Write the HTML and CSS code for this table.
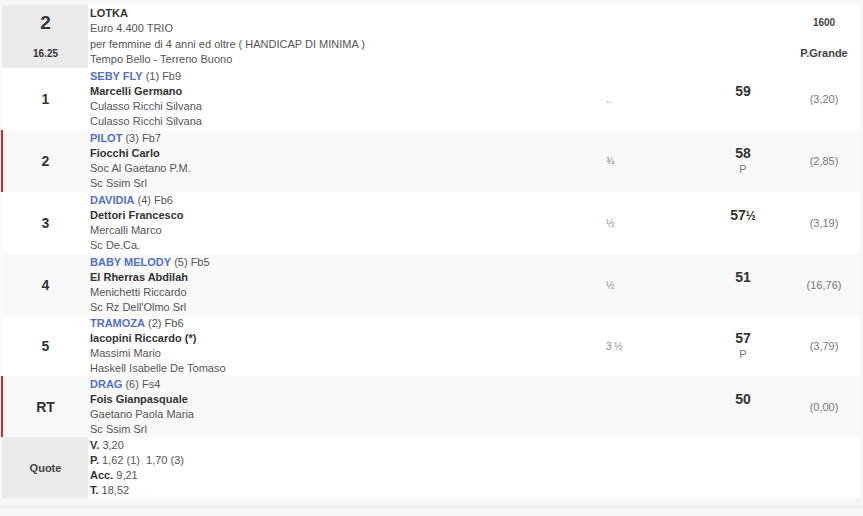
FILE: index.html
```html
<!DOCTYPE html>
<html>
<head>
<meta charset="utf-8">
<link rel="stylesheet" href="styles.css">
</head>
<body>
<div class="wrap">
<table class="race">
  <tr class="head">
    <td class="num headnum"><div class="big">2</div><div class="time">16.25</div></td>
    <td class="info head-info">
      <div class="b">LOTKA</div>
      <div>Euro 4.400 TRIO</div>
      <div>per femmine di 4 anni ed oltre ( HANDICAP DI MINIMA )</div>
      <div>Tempo Bello - Terreno Buono</div>
    </td>
    <td class="dist"></td>
    <td class="wt"></td>
    <td class="odds headright"><div class="dst">1600</div><div class="track">P.Grande</div></td>
  </tr>
  <tr>
    <td class="num">1</td>
    <td class="info"><div><span class="horse">SEBY FLY</span> (1) Fb9</div><div class="jockey">Marcelli Germano</div><div>Culasso Ricchi Silvana</div><div>Culasso Ricchi Silvana</div></td>
    <td class="dist">..</td>
    <td class="wt"><div class="kg">59</div><div class="p"></div></td>
    <td class="odds">(3,20)</td>
  </tr>
  <tr class="alt red">
    <td class="num">2</td>
    <td class="info"><div><span class="horse">PILOT</span> (3) Fb7</div><div class="jockey">Fiocchi Carlo</div><div>Soc Al Gaetano P.M.</div><div>Sc Ssim Srl</div></td>
    <td class="dist">¾</td>
    <td class="wt"><div class="kg">58</div><div class="p">P</div></td>
    <td class="odds">(2,85)</td>
  </tr>
  <tr>
    <td class="num">3</td>
    <td class="info"><div><span class="horse">DAVIDIA</span> (4) Fb6</div><div class="jockey">Dettori Francesco</div><div>Mercalli Marco</div><div>Sc De.Ca.</div></td>
    <td class="dist">½</td>
    <td class="wt"><div class="kg">57<span class="frac">½</span></div><div class="p"></div></td>
    <td class="odds">(3,19)</td>
  </tr>
  <tr class="alt">
    <td class="num">4</td>
    <td class="info"><div><span class="horse">BABY MELODY</span> (5) Fb5</div><div class="jockey">El Rherras Abdilah</div><div>Menichetti Riccardo</div><div>Sc Rz Dell'Olmo Srl</div></td>
    <td class="dist">½</td>
    <td class="wt"><div class="kg">51</div><div class="p"></div></td>
    <td class="odds">(16,76)</td>
  </tr>
  <tr class="short">
    <td class="num">5</td>
    <td class="info"><div><span class="horse">TRAMOZA</span> (2) Fb6</div><div class="jockey">Iacopini Riccardo (*)</div><div>Massimi Mario</div><div>Haskell Isabelle De Tomaso</div></td>
    <td class="dist">3 ½</td>
    <td class="wt"><div class="kg">57</div><div class="p">P</div></td>
    <td class="odds">(3,79)</td>
  </tr>
  <tr class="alt red mid">
    <td class="num">RT</td>
    <td class="info"><div><span class="horse">DRAG</span> (6) Fs4</div><div class="jockey">Fois Gianpasquale</div><div>Gaetano Paola Maria</div><div>Sc Ssim Srl</div></td>
    <td class="dist"></td>
    <td class="wt"><div class="kg">50</div><div class="p"></div></td>
    <td class="odds">(0,00)</td>
  </tr>
  <tr class="quote mid">
    <td class="num qlabel">Quote</td>
    <td class="info"><div><b>V.</b> 3,20</div><div><b>P.</b> 1,62 (1)&nbsp; 1,70 (3)</div><div><b>Acc.</b> 9,21</div><div><b>T.</b> 18,52</div></td>
    <td class="dist"></td>
    <td class="wt"></td>
    <td class="odds"></td>
  </tr>
</table>
</div>
<div class="foot"></div>
</body>
</html>
```

FILE: styles.css
```css
html, body {
  margin: 0;
  padding: 0;
  background: #f7f7f7;
  font-family: "Liberation Sans", Arial, sans-serif;
  font-size: 11px;
  color: #555;
}
.wrap {
  padding: 5px 3px 0 1px;
}
.race {
  width: 859px;
  border-collapse: collapse;
  table-layout: fixed;
  background: #fff;
}
.race td {
  padding: 0;
  vertical-align: middle;
}
.race tr {
  height: 62px;
}
.race tr.short {
  height: 60px;
}
.race tr.mid {
  height: 61px;
}
.race tr.alt td {
  background: #f9f9f9;
}
.num {
  width: 85px;
  border-left: 2px solid transparent;
  text-align: center;
  font-size: 14px;
  font-weight: bold;
  color: #333;
}
.red .num {
  border-left-color: #d7262f;
}
.race tr.head td.num,
.race tr.quote td.num {
  background: #eaeaea;
}
.race tr.head {
  height: 63px;
}
.headnum .big {
  font-size: 19px;
  line-height: 22px;
  margin-top: -2px;
}
.headnum .time {
  font-size: 10px;
  line-height: 12px;
  margin-top: 14px;
}
.info {
  width: 510px;
  padding-left: 2px !important;
  line-height: 15px;
}
.head-info {
  line-height: 15.5px;
}
.b, .jockey {
  font-weight: bold;
  color: #333;
}
.horse {
  font-weight: bold;
  color: #5270c8;
}
.info b {
  color: #333;
}
.dist {
  width: 92px;
  padding-left: 5px !important;
  font-size: 10px;
  color: #888;
}
.wt {
  width: 90px;
  text-align: center;
}
.kg {
  font-size: 14px;
  font-weight: bold;
  color: #333;
  line-height: 17px;
}
.frac {
  font-size: 12px;
}
.p {
  height: 15px;
  line-height: 15px;
  color: #777;
}
.odds {
  text-align: center;
  color: #777;
}
.headright {
  font-weight: bold;
  color: #444;
  font-size: 10px;
}
.headright .dst {
  margin-top: 2px;
}
.headright .track {
  margin-top: 19px;
  font-size: 11px;
}
.qlabel {
  font-size: 11px;
  color: #444;
}
.foot {
  margin-top: 7px;
  height: 3px;
  border-top: 1px solid #ebebeb;
  background: #f2f2f2;
}
```
